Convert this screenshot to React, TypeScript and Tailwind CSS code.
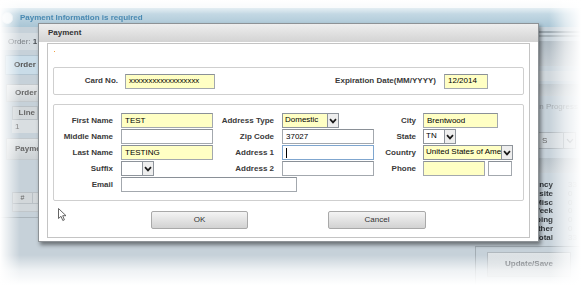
import React from "react";

const Chevron = () => (
  <svg width="8" height="6" viewBox="0 0 8 6">
    <path d="M1 1.2 L4 4.4 L7 1.2" stroke="#1a1a1a" strokeWidth="1.7" fill="none" />
  </svg>
);

function Select({ value, className, yellow }: { value: string; className: string; yellow?: boolean }) {
  return (
    <div
      className={`flex h-[15px] border border-[#8e949b] ${yellow ? "bg-[#ffffc4]" : "bg-white"} ${className}`}
    >
      <span className="flex-1 overflow-hidden whitespace-nowrap pl-[2px] text-[8px] leading-[12px] text-black">
        {value}
      </span>
      <span className="flex w-[11px] items-center justify-center border-l border-[#8e949b] bg-[#eeeeee]">
        <Chevron />
      </span>
    </div>
  );
}

function Input({
  value,
  className,
  yellow,
  focus,
  small,
}: {
  value?: string;
  className: string;
  yellow?: boolean;
  focus?: boolean;
  small?: boolean;
}) {
  return (
    <div
      className={`flex h-[15px] items-center overflow-hidden whitespace-nowrap border pl-[3px] ${
        focus ? "border-[#7fa6cf]" : "border-[#a3a8ae] border-t-[#8a9097]"
      } ${yellow ? "bg-[#ffffc4]" : "bg-white"} ${small ? "text-[7.8px]" : "text-[8px]"} leading-[12px] text-black ${className}`}
    >
      {focus ? <span className="h-[10px] w-px bg-black" /> : value}
    </div>
  );
}

const Label = ({ children, className }: { children: React.ReactNode; className: string }) => (
  <div className={`flex h-[15px] items-center justify-end whitespace-nowrap text-[8px] font-bold text-[#3a3a3a] ${className}`}>
    {children}
  </div>
);

function Background() {
  return (
    <div className="absolute inset-0 flex flex-col blur-[0.35px]">
      <div className="h-[8px] bg-[#f4f7f9]" />
      <div className="flex h-[19px] items-center gap-[7px] bg-gradient-to-b from-[#cfe1ea] to-[#a9c5d5] pl-[2px]">
        <div className="h-[12px] w-[11px] rounded-full border border-[#dfe9ef] bg-[#eef4f7]" />
        <span className="text-[8px] font-bold text-[#4a8ab2]">Payment Information is required</span>
      </div>
      <div className="flex flex-1 bg-[#c6d1d9]">
        {/* left column */}
        <div className="flex w-[475px] flex-col">
          <div className="mt-[6px] flex h-[17px] items-center bg-[#d4dbe0] pl-[8px] text-[8px] text-[#7a7f84]">
            Order: <b className="ml-[2px] text-[#4a4f54]">1</b>
          </div>
          <div className="ml-[5px] mt-[5px] flex h-[20px] items-center border border-[#b2c4d0] bg-[#c9dce8] pl-[8px] text-[8px] font-bold text-[#555]">
            Order Information
          </div>
          <div className="ml-[6px] mt-[9px] flex h-[18px] items-center border border-[#c2c8cc] bg-gradient-to-b from-[#e4e7e9] to-[#cfd4d7] pl-[8px] text-[8px] font-bold text-[#666]">
            Order Items
          </div>
          <div className="ml-[12px] mt-[4px] flex h-[14px] border border-[#b9c0c5] bg-[#d2d7da] text-[8px] font-bold text-[#666]">
            <div className="flex w-[25px] items-center justify-end border-r border-[#b9c0c5] pr-[2px]">Line</div>
          </div>
          <div className="ml-[12px] flex h-[13px] items-center bg-[#d9dee1] pl-[3px] text-[8px] text-[#777]">1</div>
          <div className="ml-[6px] mt-[5px] flex h-[22px] items-center border border-[#c2c8cc] bg-gradient-to-b from-[#e0e4e6] to-[#cdd2d5] pl-[8px] text-[8px] font-bold text-[#666]">
            Payments
          </div>
          <div className="ml-[12px] mt-[32px] flex h-[12px] border border-[#b9c0c5] bg-[#d2d7da] text-[7px] text-[#666]">
            <div className="flex w-[20px] items-center justify-center border-r border-[#b9c0c5]">#</div>
            <div className="w-[10px] border-r border-[#b9c0c5]" />
          </div>
          <div className="ml-[12px] h-[8px] border-x border-b border-[#c0c6ca] bg-[#d1d7db]" />
          <div className="mt-[5px] h-px bg-[#aab4bb]" />
        </div>
        {/* right column */}
        <div className="flex flex-1 flex-col">
          <div className="mt-[4px] h-[2px] bg-[#9aa6ae]" />
          <div className="mt-[2px] h-[2px] bg-[#a6b1b8]" />
          <div className="mt-[4px] h-[25px] bg-gradient-to-b from-[#aeb9c1] to-[#c4ccd2]" />
          <div className="mt-[5px] h-[10px] bg-[#cfd6db]" />
          <div className="mt-[3px] h-[12px] bg-gradient-to-b from-[#bcc5cb] to-[#c9d0d5]" />
          <div className="flex h-[22px] items-center pl-[62px] text-[8px] text-[#9aa1a6]">In Progress</div>
          <div className="ml-[25px] mt-[14px] flex h-[17px] w-[76px] border border-[#aab2b8] bg-[#cfd6db] text-[8px] text-[#666]">
            <span className="flex-1 pl-[41px] leading-[15px]">S</span>
            <span className="flex w-[12px] items-center justify-center border-l border-[#aab2b8]">
              <svg width="8" height="6" viewBox="0 0 8 6">
                <path d="M1 1.2 L4 4.4 L7 1.2" stroke="#8a9298" strokeWidth="1.2" fill="none" />
              </svg>
            </span>
          </div>
          <div className="mt-[9px] h-[15px] bg-gradient-to-b from-[#b7c1c8] to-[#c6ced4]" />
          <div className="mt-[8px] grid grid-cols-[78px_1fr] text-[8px] leading-[8.8px]">
            {[
              ["Frequency", "33"],
              ["Website", "0"],
              ["Misc", "0"],
              ["Week", "0"],
              ["Shipping", "0"],
              ["Other", "0"],
              ["Total", "33"],
            ].map(([l, v]) => (
              <React.Fragment key={l}>
                <span className="text-right font-bold text-[#2f3337]">{l}</span>
                <span className="pl-[15px] text-[#a7aeb3]">{v}</span>
              </React.Fragment>
            ))}
          </div>
          <div className="mt-[3px] flex flex-1 flex-col border-l border-t border-[#a3adb4]">
            <div className="ml-[11px] mt-[5px] flex h-[25px] w-[84px] items-center justify-center border border-[#b0b8be] bg-gradient-to-b from-[#dfe4e7] to-[#bcc5cb] text-[8px] font-bold text-[#555b61]">
              Update/Save
            </div>
          </div>
        </div>
      </div>
    </div>
  );
}

function Vignette() {
  return (
    <>
      <div className="pointer-events-none absolute inset-x-0 top-0 h-[14px] bg-gradient-to-b from-white to-transparent" />
      <div className="pointer-events-none absolute inset-x-0 bottom-0 h-[30px] bg-gradient-to-t from-white via-white/70 to-transparent" />
      <div className="pointer-events-none absolute inset-y-0 left-0 w-[20px] bg-gradient-to-r from-white to-transparent" />
      <div className="pointer-events-none absolute inset-y-0 right-0 w-[32px] bg-gradient-to-l from-white via-white/60 to-transparent" />
    </>
  );
}

function Dialog() {
  return (
    <div className="absolute left-[38px] top-[23px] flex w-[501px] flex-col border border-[#8d9296] bg-white shadow-[2px_3px_4px_rgba(0,0,0,0.45)]">
      <div className="flex h-[18px] items-center bg-gradient-to-b from-[#eeeeee] to-[#d3d3d3] pl-[9px] text-[8px] font-bold text-[#333]">
        Payment
      </div>
      <div className="mx-[8px] mb-[3px] mt-px flex flex-col border border-[#c4c4c4] px-[5px] pb-[8px]">
        <div className="h-[23px] pl-[1px] pt-[7px]">
          <div className="h-px w-px bg-[#f0a040]" />
        </div>
        {/* card fieldset */}
        <div className="flex h-[28px] items-center rounded-[2px] border border-[#cfcfcf]">
          <Label className="w-[64px]">Card No.</Label>
          <Input className="ml-[7px] w-[90px]" yellow small value="xxxxxxxxxxxxxxxxxx" />
          <div className="ml-auto flex items-center pr-[35px]">
            <Label className="">Expiration Date(MM/YYYY)</Label>
            <Input className="ml-[8px] w-[44px]" yellow value="12/2014" />
          </div>
        </div>
        {/* address fieldset */}
        <div className="mt-[9px] grid grid-cols-[67px_92px_69px_92px_49px_1fr] gap-y-[1px] rounded-[2px] border border-[#cfcfcf] pb-[8px] pt-[8px]">
          <Label className="pr-[8px]">First Name</Label>
          <Input className="w-[92px]" yellow value="TEST" />
          <Label className="pr-[8px]">Address Type</Label>
          <Select className="w-[57px]" yellow value="Domestic" />
          <Label className="pr-[7px]">City</Label>
          <Input className="w-[75px]" yellow value="Brentwood" />

          <Label className="pr-[8px]">Middle Name</Label>
          <Input className="w-[92px]" />
          <Label className="pr-[8px]">Zip Code</Label>
          <Input className="w-[92px]" value="37027" />
          <Label className="pr-[7px]">State</Label>
          <Select className="w-[33px]" value="TN" />

          <Label className="pr-[8px]">Last Name</Label>
          <Input className="w-[92px]" yellow value="TESTING" />
          <Label className="pr-[8px]">Address 1</Label>
          <Input className="w-[92px]" focus />
          <Label className="pr-[7px]">Country</Label>
          <Select className="w-[90px]" yellow value="United States of America" />

          <Label className="pr-[8px]">Suffix</Label>
          <Select className="w-[33px]" value="" />
          <Label className="pr-[8px]">Address 2</Label>
          <Input className="w-[92px]" />
          <Label className="pr-[7px]">Phone</Label>
          <div className="flex gap-[3px]">
            <Input className="w-[62px]" yellow />
            <Input className="w-[24px]" />
          </div>

          <Label className="pr-[8px]">Email</Label>
          <div className="col-span-5">
            <Input className="w-[176px]" />
          </div>
        </div>
        {/* buttons */}
        <div className="relative mt-[10px] flex justify-center gap-[80px]">
          <svg className="absolute left-[5px] top-[-3px]" width="10" height="14" viewBox="0 0 10 14">
            <path d="M0.5 0.5 L0.5 10.5 L3 8.3 L4.8 12.5 L6.4 11.8 L4.7 7.7 L8 7.7 Z" fill="white" stroke="#555" strokeWidth="0.9" strokeLinejoin="round" />
          </svg>
          <button className="flex h-[18px] w-[97px] items-center justify-center rounded-[2px] border border-[#a9a9a9] bg-gradient-to-b from-[#f4f4f4] to-[#d2d2d2] text-[8px] text-[#333]">
            OK
          </button>
          <button className="flex h-[18px] w-[98px] items-center justify-center rounded-[2px] border border-[#a9a9a9] bg-gradient-to-b from-[#f4f4f4] to-[#d2d2d2] text-[8px] text-[#333]">
            Cancel
          </button>
        </div>
      </div>
    </div>
  );
}

export default function App() {
  return (
    <div className="relative h-[285px] w-[581px] overflow-hidden bg-white font-['Liberation_Sans',Arial,sans-serif]">
      <Background />
      <Vignette />
      <Dialog />
    </div>
  );
}
